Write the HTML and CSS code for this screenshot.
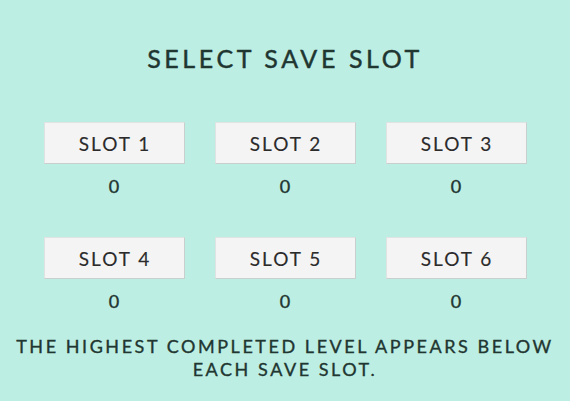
FILE: index.html
```html
<!DOCTYPE html>
<html>
<head>
<meta charset="utf-8">
<link rel="stylesheet" href="styles.css">
</head>
<body>
<main class="screen">
  <h1 class="title">SELECT SAVE SLOT</h1>
  <div class="slots">
    <div class="slot"><button class="slot-btn">SLOT 1</button><div class="level">0</div></div>
    <div class="slot"><button class="slot-btn">SLOT 2</button><div class="level">0</div></div>
    <div class="slot"><button class="slot-btn">SLOT 3</button><div class="level">0</div></div>
    <div class="slot"><button class="slot-btn">SLOT 4</button><div class="level">0</div></div>
    <div class="slot"><button class="slot-btn">SLOT 5</button><div class="level">0</div></div>
    <div class="slot"><button class="slot-btn">SLOT 6</button><div class="level">0</div></div>
  </div>
  <p class="note">THE HIGHEST COMPLETED LEVEL APPEARS BELOW<br>EACH SAVE SLOT.</p>
</main>
</body>
</html>
```
FILE: styles.css
```css
html, body {
  margin: 0;
  padding: 0;
  background: #bdeee3;
}
.screen {
  width: 570px;
  height: 401px;
  box-sizing: border-box;
  padding-top: 44px;
  font-family: "Lato", "DejaVu Sans", sans-serif;
  color: #1f3631;
  display: flex;
  flex-direction: column;
  align-items: center;
}
.title {
  margin: 0;
  font-size: 25px;
  font-weight: 400;
  letter-spacing: 3.6px;
  line-height: 28px;
  -webkit-text-stroke: 0.45px #1f3631;
}
.slots {
  margin-top: 50px;
  display: grid;
  grid-template-columns: repeat(3, 141px);
  column-gap: 30px;
  row-gap: 40px;
}
.slot {
  display: flex;
  flex-direction: column;
  align-items: center;
}
.slot-btn {
  width: 141px;
  height: 42px;
  box-sizing: border-box;
  background: #f4f4f4;
  border: 1px solid #dfe3e2;
  border-right-color: #c9cfcd;
  border-bottom-color: #c9cfcd;
  font-family: inherit;
  font-size: 19px;
  letter-spacing: 2px;
  color: #2b2b2b;
  padding: 0 0 0 2px;
  -webkit-text-stroke: 0.15px #2b2b2b;
}
.level {
  margin-top: 11px;
  font-size: 18px;
  font-weight: 400;
  line-height: 22px;
  height: 22px;
  -webkit-text-stroke: 0.4px #1f3631;
}
.note {
  margin: 23px 0 0;
  text-align: center;
  font-size: 18px;
  font-weight: 400;
  letter-spacing: 2.55px;
  line-height: 23px;
  -webkit-text-stroke: 0.35px #1f3631;
}
```
